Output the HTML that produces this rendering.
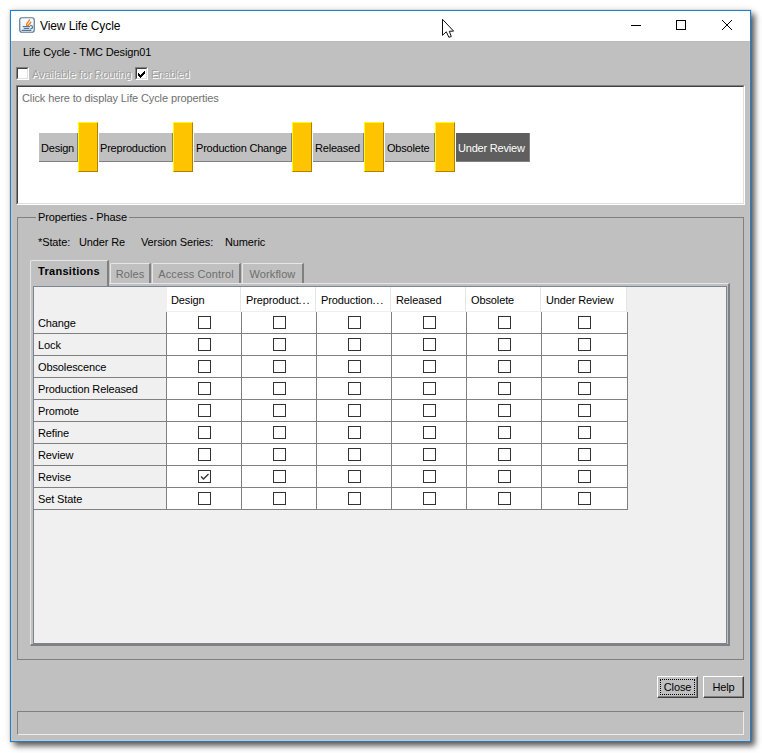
<!DOCTYPE html><html><head><meta charset='utf-8'><style>
*{margin:0;padding:0;box-sizing:border-box}
html,body{width:762px;height:753px;overflow:hidden;background:#fff;font-family:"Liberation Sans", sans-serif;font-size:11px;color:#000}
.abs{position:absolute}
.t{position:absolute;white-space:nowrap;line-height:13px;letter-spacing:-0.12px}
</style></head><body>
<div class="abs" style="left:10px;top:10px;width:741px;height:732px;box-shadow:4px 4px 6px rgba(0,0,0,0.62), 0 0 8px rgba(0,0,0,0.10), 0 0 0 1px rgba(235,215,195,0.35);"></div>
<div class="abs" style="left:10px;top:10px;width:741px;height:732px;border:1px solid #1c7fd6;background:#c0c0c0;"></div>
<div class="abs" style="left:11px;top:11px;width:739px;height:30px;background:#fff;"></div>
<div class="abs" style="left:11px;top:41px;width:739px;height:700px;border-left:1px solid #cac4be;border-right:1px solid #cac4be;border-bottom:1px solid #cac4be;border-top:1px solid #bababa"></div>
<svg class="abs" style="left:19px;top:17px" width="16" height="16" viewBox="0 0 16 16">
<defs><linearGradient id="jg" x1="0" y1="0" x2="0" y2="1"><stop offset="0" stop-color="#fbfbfb"/><stop offset="1" stop-color="#e9edf1"/></linearGradient></defs>
<rect x="0.75" y="0.75" width="14.5" height="14.5" rx="2.2" fill="url(#jg)" stroke="#5b7a97" stroke-width="1.2"/>
<path d="M8.4 9.0 C6.0 7.4 9.2 5.6 10.4 2.9 M9.4 8.8 C8.8 7.4 11.6 6.8 11.8 5.2" stroke="#e97b17" stroke-width="1.3" fill="none" stroke-linecap="round"/>
<path d="M4.2 9.6 H10.6 M5.3 11.5 H9.8 M3.2 13.4 H11.8 M11.6 8.4 C14.2 8.6 14.2 11.6 11.8 11.8" stroke="#4f7496" stroke-width="1.2" fill="none" stroke-linecap="round"/>
</svg>
<div class="t" style="left:40px;top:19px;font-size:12px;line-height:15px;color:#000;letter-spacing:-0.1px">View Life Cycle</div>
<div class="abs" style="left:631px;top:25px;width:10px;height:1px;background:#000"></div>
<div class="abs" style="left:676px;top:20px;width:10px;height:10px;border:1px solid #000"></div>
<svg class="abs" style="left:721px;top:19px" width="12" height="12" viewBox="0 0 12 12"><path d="M1 1 L11 11 M11 1 L1 11" stroke="#000" stroke-width="1"/></svg>
<div class="t" style="left:23px;top:46px;">Life Cycle - TMC Design01</div>
<div class="abs" style="left:16px;top:67px;width:13px;height:13px;border-top:1px solid #808080;border-left:1px solid #808080;border-right:1px solid #fff;border-bottom:1px solid #fff;"><div style="width:11px;height:11px;border-top:1px solid #404040;border-left:1px solid #404040;border-right:1px solid #dfdfdf;border-bottom:1px solid #dfdfdf;background:#fff;position:relative"></div></div>
<div class="t" style="left:33px;top:69px;color:#fff;letter-spacing:-0.08px">Available for Routing</div>
<div class="t" style="left:32px;top:68px;color:#a0a0a0;letter-spacing:-0.08px">Available for Routing</div>
<div class="abs" style="left:135px;top:67px;width:13px;height:13px;border-top:1px solid #808080;border-left:1px solid #808080;border-right:1px solid #fff;border-bottom:1px solid #fff;"><div style="width:11px;height:11px;border-top:1px solid #404040;border-left:1px solid #404040;border-right:1px solid #dfdfdf;border-bottom:1px solid #dfdfdf;background:#fff;position:relative"><svg style="position:absolute;left:1px;top:1px" width="9" height="9" viewBox="0 0 9 9"><g fill="#000" shape-rendering="crispEdges"><rect x="6" y="1" width="1" height="1"/><rect x="5" y="2" width="1" height="1"/><rect x="6" y="2" width="1" height="1"/><rect x="0" y="3" width="1" height="1"/><rect x="4" y="3" width="1" height="1"/><rect x="5" y="3" width="1" height="1"/><rect x="6" y="3" width="1" height="1"/><rect x="0" y="4" width="1" height="1"/><rect x="1" y="4" width="1" height="1"/><rect x="3" y="4" width="1" height="1"/><rect x="4" y="4" width="1" height="1"/><rect x="5" y="4" width="1" height="1"/><rect x="0" y="5" width="1" height="1"/><rect x="1" y="5" width="1" height="1"/><rect x="2" y="5" width="1" height="1"/><rect x="3" y="5" width="1" height="1"/><rect x="4" y="5" width="1" height="1"/><rect x="1" y="6" width="1" height="1"/><rect x="2" y="6" width="1" height="1"/><rect x="3" y="6" width="1" height="1"/><rect x="2" y="7" width="1" height="1"/></g></svg></div></div>
<div class="t" style="left:152px;top:69px;color:#fff;letter-spacing:-0.3px">Enabled</div>
<div class="t" style="left:151px;top:68px;color:#a0a0a0;letter-spacing:-0.3px">Enabled</div>
<div class="abs" style="left:16px;top:85px;width:729px;height:120px;border-top:1px solid #808080;border-left:1px solid #808080;border-right:1px solid #fff;border-bottom:1px solid #fff;"><div style="width:727px;height:118px;border-top:1px solid #404040;border-left:1px solid #404040;border-right:1px solid #dfdfdf;border-bottom:1px solid #dfdfdf;background:#fff"></div></div>
<div class="t" style="left:22px;top:92px;color:#707070">Click here to display Life Cycle properties</div>
<div class="abs" style="left:39px;top:133px;width:39px;height:29px;background:#c0c0c0;border-right:1px solid #808080;border-bottom:1px solid #808080;"></div>
<div class="t" style="left:41px;top:142px;color:#000;letter-spacing:-0.2px">Design</div>
<div class="abs" style="left:78px;top:122px;width:20px;height:50px;background:#ffc400;border-top:1px solid #ffff00;border-left:1px solid #ffff00;border-right:1px solid #b08000;border-bottom:1px solid #b08000;"></div>
<div class="abs" style="left:99px;top:133px;width:74px;height:29px;background:#c0c0c0;border-right:1px solid #808080;border-bottom:1px solid #808080;"></div>
<div class="t" style="left:100px;top:142px;color:#000;letter-spacing:-0.2px">Preproduction</div>
<div class="abs" style="left:173px;top:122px;width:20px;height:50px;background:#ffc400;border-top:1px solid #ffff00;border-left:1px solid #ffff00;border-right:1px solid #b08000;border-bottom:1px solid #b08000;"></div>
<div class="abs" style="left:194px;top:133px;width:98px;height:29px;background:#c0c0c0;border-right:1px solid #808080;border-bottom:1px solid #808080;"></div>
<div class="t" style="left:196px;top:142px;color:#000;letter-spacing:-0.2px">Production Change</div>
<div class="abs" style="left:292px;top:122px;width:20px;height:50px;background:#ffc400;border-top:1px solid #ffff00;border-left:1px solid #ffff00;border-right:1px solid #b08000;border-bottom:1px solid #b08000;"></div>
<div class="abs" style="left:313px;top:133px;width:51px;height:29px;background:#c0c0c0;border-right:1px solid #808080;border-bottom:1px solid #808080;"></div>
<div class="t" style="left:315px;top:142px;color:#000;letter-spacing:-0.2px">Released</div>
<div class="abs" style="left:364px;top:122px;width:20px;height:50px;background:#ffc400;border-top:1px solid #ffff00;border-left:1px solid #ffff00;border-right:1px solid #b08000;border-bottom:1px solid #b08000;"></div>
<div class="abs" style="left:385px;top:133px;width:50px;height:29px;background:#c0c0c0;border-right:1px solid #808080;border-bottom:1px solid #808080;"></div>
<div class="t" style="left:387px;top:142px;color:#000;letter-spacing:-0.2px">Obsolete</div>
<div class="abs" style="left:435px;top:122px;width:20px;height:50px;background:#ffc400;border-top:1px solid #ffff00;border-left:1px solid #ffff00;border-right:1px solid #b08000;border-bottom:1px solid #b08000;"></div>
<div class="abs" style="left:456px;top:133px;width:74px;height:29px;background:#5f5f5f;border-right:1px solid #808080;border-bottom:1px solid #808080;"></div>
<div class="t" style="left:458px;top:142px;color:#fff;letter-spacing:-0.2px">Under Review</div>
<div class="abs" style="left:17px;top:217px;width:727px;height:443px;border:1px solid #808080;"></div>
<div class="t" style="left:36px;top:211px;padding:0 2px;background:#c0c0c0">Properties - Phase</div>
<div class="t" style="left:38px;top:236px;">*State:</div>
<div class="t" style="left:79px;top:236px;">Under Re</div>
<div class="t" style="left:141px;top:236px;">Version Series:</div>
<div class="t" style="left:225px;top:236px;">Numeric</div>
<div class="abs" style="left:30px;top:283px;width:700px;height:363px;border-left:1px solid #e6e6e6;border-top:1px solid #e6e6e6;border-right:2px solid #808080;border-bottom:2px solid #808080;"></div>
<div class="abs" style="left:110px;top:263px;width:41px;height:20px;border-left:1px solid #e6e6e6;border-top:1px solid #e6e6e6;border-right:2px solid #808080;border-top-left-radius:2px;background:#c0c0c0"></div><div class="t" style="left:110px;top:268px;width:40px;text-align:center;color:#6e6e6e;letter-spacing:0.1px">Roles</div>
<div class="abs" style="left:152px;top:263px;width:89px;height:20px;border-left:1px solid #e6e6e6;border-top:1px solid #e6e6e6;border-right:2px solid #808080;border-top-left-radius:2px;background:#c0c0c0"></div><div class="t" style="left:152px;top:268px;width:88px;text-align:center;color:#6e6e6e;letter-spacing:0.1px">Access Control</div>
<div class="abs" style="left:242px;top:263px;width:62px;height:20px;border-left:1px solid #e6e6e6;border-top:1px solid #e6e6e6;border-right:2px solid #808080;border-top-left-radius:2px;background:#c0c0c0"></div><div class="t" style="left:242px;top:268px;width:61px;text-align:center;color:#6e6e6e;letter-spacing:0.1px">Workflow</div>
<div class="abs" style="left:30px;top:260px;width:79px;height:27px;border-left:1px solid #e6e6e6;border-top:1px solid #e6e6e6;border-right:2px solid #808080;border-top-left-radius:2px;background:#c0c0c0"></div><div class="t" style="left:30px;top:265px;width:78px;text-align:center;font-weight:bold;letter-spacing:0.3px">Transitions</div>
<div class="abs" style="left:33px;top:286px;width:694px;height:358px;border:1px solid #7a8595;background:#f0f0f0"></div>
<div class="abs" style="left:167px;top:287px;width:74px;height:25px;background:#fff;border-right:1px solid #e5e5e5;border-bottom:1px solid #efefef"></div>
<div class="t" style="left:171px;top:294px;">Design</div>
<div class="abs" style="left:241px;top:287px;width:75px;height:25px;background:#fff;border-right:1px solid #e5e5e5;border-bottom:1px solid #efefef"></div>
<div class="t" style="left:246px;top:294px;">Preproduct<span style='letter-spacing:0.9px'>...</span></div>
<div class="abs" style="left:316px;top:287px;width:75px;height:25px;background:#fff;border-right:1px solid #e5e5e5;border-bottom:1px solid #efefef"></div>
<div class="t" style="left:321px;top:294px;">Production<span style='letter-spacing:0.9px'>...</span></div>
<div class="abs" style="left:391px;top:287px;width:75px;height:25px;background:#fff;border-right:1px solid #e5e5e5;border-bottom:1px solid #efefef"></div>
<div class="t" style="left:396px;top:294px;">Released</div>
<div class="abs" style="left:466px;top:287px;width:75px;height:25px;background:#fff;border-right:1px solid #e5e5e5;border-bottom:1px solid #efefef"></div>
<div class="t" style="left:471px;top:294px;">Obsolete</div>
<div class="abs" style="left:541px;top:287px;width:86px;height:25px;background:#fff;border-right:1px solid #e5e5e5;border-bottom:1px solid #efefef"></div>
<div class="t" style="left:546px;top:294px;">Under Review</div>
<div class="abs" style="left:166px;top:312px;width:462px;height:198px;background:#fff"></div>
<div class="abs" style="left:34px;top:333px;width:594px;height:1px;background:#808080"></div>
<div class="abs" style="left:34px;top:355px;width:594px;height:1px;background:#808080"></div>
<div class="abs" style="left:34px;top:377px;width:594px;height:1px;background:#808080"></div>
<div class="abs" style="left:34px;top:399px;width:594px;height:1px;background:#808080"></div>
<div class="abs" style="left:34px;top:421px;width:594px;height:1px;background:#808080"></div>
<div class="abs" style="left:34px;top:443px;width:594px;height:1px;background:#808080"></div>
<div class="abs" style="left:34px;top:465px;width:594px;height:1px;background:#808080"></div>
<div class="abs" style="left:34px;top:487px;width:594px;height:1px;background:#808080"></div>
<div class="abs" style="left:34px;top:509px;width:594px;height:1px;background:#808080"></div>
<div class="abs" style="left:166px;top:312px;width:1px;height:198px;background:#808080"></div>
<div class="abs" style="left:241px;top:312px;width:1px;height:198px;background:#808080"></div>
<div class="abs" style="left:316px;top:312px;width:1px;height:198px;background:#808080"></div>
<div class="abs" style="left:391px;top:312px;width:1px;height:198px;background:#808080"></div>
<div class="abs" style="left:466px;top:312px;width:1px;height:198px;background:#808080"></div>
<div class="abs" style="left:541px;top:312px;width:1px;height:198px;background:#808080"></div>
<div class="abs" style="left:627px;top:312px;width:1px;height:198px;background:#808080"></div>
<div class="t" style="left:38px;top:317px;">Change</div>
<div class="abs" style="left:198px;top:316px;width:13px;height:13px;border:1px solid #333;background:#fff"></div>
<div class="abs" style="left:273px;top:316px;width:13px;height:13px;border:1px solid #333;background:#fff"></div>
<div class="abs" style="left:348px;top:316px;width:13px;height:13px;border:1px solid #333;background:#fff"></div>
<div class="abs" style="left:423px;top:316px;width:13px;height:13px;border:1px solid #333;background:#fff"></div>
<div class="abs" style="left:498px;top:316px;width:13px;height:13px;border:1px solid #333;background:#fff"></div>
<div class="abs" style="left:578px;top:316px;width:13px;height:13px;border:1px solid #333;background:#fff"></div>
<div class="t" style="left:38px;top:339px;">Lock</div>
<div class="abs" style="left:198px;top:338px;width:13px;height:13px;border:1px solid #333;background:#fff"></div>
<div class="abs" style="left:273px;top:338px;width:13px;height:13px;border:1px solid #333;background:#fff"></div>
<div class="abs" style="left:348px;top:338px;width:13px;height:13px;border:1px solid #333;background:#fff"></div>
<div class="abs" style="left:423px;top:338px;width:13px;height:13px;border:1px solid #333;background:#fff"></div>
<div class="abs" style="left:498px;top:338px;width:13px;height:13px;border:1px solid #333;background:#fff"></div>
<div class="abs" style="left:578px;top:338px;width:13px;height:13px;border:1px solid #333;background:#fff"></div>
<div class="t" style="left:38px;top:361px;">Obsolescence</div>
<div class="abs" style="left:198px;top:360px;width:13px;height:13px;border:1px solid #333;background:#fff"></div>
<div class="abs" style="left:273px;top:360px;width:13px;height:13px;border:1px solid #333;background:#fff"></div>
<div class="abs" style="left:348px;top:360px;width:13px;height:13px;border:1px solid #333;background:#fff"></div>
<div class="abs" style="left:423px;top:360px;width:13px;height:13px;border:1px solid #333;background:#fff"></div>
<div class="abs" style="left:498px;top:360px;width:13px;height:13px;border:1px solid #333;background:#fff"></div>
<div class="abs" style="left:578px;top:360px;width:13px;height:13px;border:1px solid #333;background:#fff"></div>
<div class="t" style="left:38px;top:383px;">Production Released</div>
<div class="abs" style="left:198px;top:382px;width:13px;height:13px;border:1px solid #333;background:#fff"></div>
<div class="abs" style="left:273px;top:382px;width:13px;height:13px;border:1px solid #333;background:#fff"></div>
<div class="abs" style="left:348px;top:382px;width:13px;height:13px;border:1px solid #333;background:#fff"></div>
<div class="abs" style="left:423px;top:382px;width:13px;height:13px;border:1px solid #333;background:#fff"></div>
<div class="abs" style="left:498px;top:382px;width:13px;height:13px;border:1px solid #333;background:#fff"></div>
<div class="abs" style="left:578px;top:382px;width:13px;height:13px;border:1px solid #333;background:#fff"></div>
<div class="t" style="left:38px;top:405px;">Promote</div>
<div class="abs" style="left:198px;top:404px;width:13px;height:13px;border:1px solid #333;background:#fff"></div>
<div class="abs" style="left:273px;top:404px;width:13px;height:13px;border:1px solid #333;background:#fff"></div>
<div class="abs" style="left:348px;top:404px;width:13px;height:13px;border:1px solid #333;background:#fff"></div>
<div class="abs" style="left:423px;top:404px;width:13px;height:13px;border:1px solid #333;background:#fff"></div>
<div class="abs" style="left:498px;top:404px;width:13px;height:13px;border:1px solid #333;background:#fff"></div>
<div class="abs" style="left:578px;top:404px;width:13px;height:13px;border:1px solid #333;background:#fff"></div>
<div class="t" style="left:38px;top:427px;">Refine</div>
<div class="abs" style="left:198px;top:426px;width:13px;height:13px;border:1px solid #333;background:#fff"></div>
<div class="abs" style="left:273px;top:426px;width:13px;height:13px;border:1px solid #333;background:#fff"></div>
<div class="abs" style="left:348px;top:426px;width:13px;height:13px;border:1px solid #333;background:#fff"></div>
<div class="abs" style="left:423px;top:426px;width:13px;height:13px;border:1px solid #333;background:#fff"></div>
<div class="abs" style="left:498px;top:426px;width:13px;height:13px;border:1px solid #333;background:#fff"></div>
<div class="abs" style="left:578px;top:426px;width:13px;height:13px;border:1px solid #333;background:#fff"></div>
<div class="t" style="left:38px;top:449px;">Review</div>
<div class="abs" style="left:198px;top:448px;width:13px;height:13px;border:1px solid #333;background:#fff"></div>
<div class="abs" style="left:273px;top:448px;width:13px;height:13px;border:1px solid #333;background:#fff"></div>
<div class="abs" style="left:348px;top:448px;width:13px;height:13px;border:1px solid #333;background:#fff"></div>
<div class="abs" style="left:423px;top:448px;width:13px;height:13px;border:1px solid #333;background:#fff"></div>
<div class="abs" style="left:498px;top:448px;width:13px;height:13px;border:1px solid #333;background:#fff"></div>
<div class="abs" style="left:578px;top:448px;width:13px;height:13px;border:1px solid #333;background:#fff"></div>
<div class="t" style="left:38px;top:471px;">Revise</div>
<div class="abs" style="left:198px;top:470px;width:13px;height:13px;border:1px solid #333;background:#fff"><svg style="position:absolute;left:0;top:0" width="11" height="11" viewBox="0 0 11 11"><path d="M2 5.5 L4.5 8 L9.5 3" stroke="#333" stroke-width="1.3" fill="none"/></svg></div>
<div class="abs" style="left:273px;top:470px;width:13px;height:13px;border:1px solid #333;background:#fff"></div>
<div class="abs" style="left:348px;top:470px;width:13px;height:13px;border:1px solid #333;background:#fff"></div>
<div class="abs" style="left:423px;top:470px;width:13px;height:13px;border:1px solid #333;background:#fff"></div>
<div class="abs" style="left:498px;top:470px;width:13px;height:13px;border:1px solid #333;background:#fff"></div>
<div class="abs" style="left:578px;top:470px;width:13px;height:13px;border:1px solid #333;background:#fff"></div>
<div class="t" style="left:38px;top:493px;">Set State</div>
<div class="abs" style="left:198px;top:492px;width:13px;height:13px;border:1px solid #333;background:#fff"></div>
<div class="abs" style="left:273px;top:492px;width:13px;height:13px;border:1px solid #333;background:#fff"></div>
<div class="abs" style="left:348px;top:492px;width:13px;height:13px;border:1px solid #333;background:#fff"></div>
<div class="abs" style="left:423px;top:492px;width:13px;height:13px;border:1px solid #333;background:#fff"></div>
<div class="abs" style="left:498px;top:492px;width:13px;height:13px;border:1px solid #333;background:#fff"></div>
<div class="abs" style="left:578px;top:492px;width:13px;height:13px;border:1px solid #333;background:#fff"></div>
<div class="abs" style="left:657px;top:676px;width:41px;height:22px;border-top:1px solid #fff;border-left:1px solid #fff;border-right:1px solid #404040;border-bottom:1px solid #404040;background:#c0c0c0"><div style="position:absolute;left:0;top:0;right:0;bottom:0;border-right:1px solid #808080;border-bottom:1px solid #808080;"></div><div style="position:absolute;left:2px;top:2px;right:2px;bottom:2px;border:1px dotted #000;"></div><div class="t" style="left:0;top:4px;width:39px;text-align:center">Close</div></div>
<div class="abs" style="left:703px;top:676px;width:41px;height:22px;border-top:1px solid #fff;border-left:1px solid #fff;border-right:1px solid #404040;border-bottom:1px solid #404040;background:#c0c0c0"><div style="position:absolute;left:0;top:0;right:0;bottom:0;border-right:1px solid #808080;border-bottom:1px solid #808080;"></div><div class="t" style="left:0;top:4px;width:39px;text-align:center">Help</div></div>
<div class="abs" style="left:17px;top:711px;width:727px;height:24px;border-top:1px solid #808080;border-left:1px solid #808080;border-right:1px solid #ececec;border-bottom:1px solid #ececec;"></div>
<svg class="abs" style="left:441px;top:17px" width="15" height="23" viewBox="0 0 15 23"><path d="M1.5 2.3 L1.5 18.3 L5.3 14.8 L7.9 20.3 L10.3 19.5 L8.3 14.3 L12.6 14.1 Z" fill="#fff" stroke="#111" stroke-width="1" stroke-linejoin="round"/></svg>
</body></html>
